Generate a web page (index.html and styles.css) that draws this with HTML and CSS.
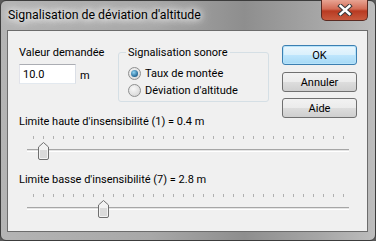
FILE: index.html
```html
<!DOCTYPE html>
<html lang="fr">
<head>
  <meta charset="UTF-8">
  <title>Signalisation de déviation d'altitude</title>
  <link rel="stylesheet" href="styles.css">
</head>
<body>
  <div class="window">
    <div class="titlebar">
      <span class="title">Signalisation de déviation d'altitude</span>
      <div class="close">
        <svg width="16" height="12" viewBox="0 0 16 12">
          <path d="M3.5 2 L12.5 10 M12.5 2 L3.5 10" stroke="#3a3a3a" stroke-width="4.4" stroke-linecap="square"/>
          <path d="M3.5 2 L12.5 10 M12.5 2 L3.5 10" stroke="#fff" stroke-width="2.4" stroke-linecap="square"/>
        </svg>
      </div>
    </div>

    <div class="client">
      <div class="top">
        <div class="value-col">
          <label class="label">Valeur demandée</label>
          <div class="value-row">
            <input class="field" type="text" value="10.0">
            <span class="unit">m</span>
          </div>
        </div>

        <fieldset class="group">
          <legend>Signalisation sonore</legend>
          <div class="radio"><span class="dot checked"></span>Taux de montée</div>
          <div class="radio"><span class="dot"></span>Déviation d'altitude</div>
        </fieldset>

        <div class="buttons">
          <button class="btn default">OK</button>
          <button class="btn">Annuler</button>
          <button class="btn">Aide</button>
        </div>
      </div>

      <div class="slider-block">
        <div class="label">Limite haute d'insensibilité (1) = 0.4 m</div>
        <div class="slider">
          <div class="ticks"></div>
          <div class="track"></div>
          <svg class="thumb" style="left: 19px" width="11" height="18" viewBox="0 0 11 18">
            <path d="M0.5 5 L5.5 0.5 L10.5 5 L10.5 16 Q10.5 17.5 9 17.5 L2 17.5 Q0.5 17.5 0.5 16 Z" fill="#f2f2f2" stroke="#6f6f6f"/>
            <path d="M2 8 L9 8 L9 16 L2 16 Z" fill="#dadada"/>
          </svg>
        </div>
      </div>

      <div class="slider-block">
        <div class="label">Limite basse d'insensibilité (7) = 2.8 m</div>
        <div class="slider">
          <div class="ticks"></div>
          <div class="track"></div>
          <svg class="thumb" style="left: 79px" width="11" height="18" viewBox="0 0 11 18">
            <path d="M0.5 5 L5.5 0.5 L10.5 5 L10.5 16 Q10.5 17.5 9 17.5 L2 17.5 Q0.5 17.5 0.5 16 Z" fill="#f2f2f2" stroke="#6f6f6f"/>
            <path d="M2 8 L9 8 L9 16 L2 16 Z" fill="#dadada"/>
          </svg>
        </div>
      </div>
    </div>
  </div>
</body>
</html>
```

FILE: styles.css
```css
body {
  margin: 0;
  background: #5a5a5a;
  font-family: Roboto, 'Noto Sans', sans-serif;
  font-size: 11px;
  color: #000;
}

.window {
  width: 376px;
  height: 241px;
  box-sizing: border-box;
  border: 1px solid #3c3c3c;
  border-radius: 6px;
  background: linear-gradient(to right, #b4b4b4 0%, #a8a8a8 40%, #8e8e8e 65%, #a6a6a6 85%, #bdbdbd 100%);
  padding: 0 7px 8px 6px;
  display: flex;
  flex-direction: column;
}

.titlebar {
  height: 30px;
  display: flex;
  justify-content: space-between;
  align-items: flex-start;
}

.title {
  margin-top: 7px;
  margin-left: 1px;
  font-size: 12.3px;
  text-shadow: 0 0 6px #fff, 0 0 10px #fff, 0 0 14px #eee;
}

.close {
  width: 47px;
  height: 21px;
  margin-top: -1px;
  box-sizing: border-box;
  border: 1px solid #5a2a22;
  border-top: none;
  border-radius: 0 0 5px 5px;
  background: linear-gradient(#e8a493 0%, #d26b55 45%, #b83a22 55%, #c85a3e 100%);
  display: flex;
  align-items: center;
  justify-content: center;
}

.client {
  flex: 1;
  background: #f0f0f0;
  border: 1px solid #6c6c6c;
  padding: 0 0 0 11px;
}

.top {
  display: flex;
  align-items: flex-start;
  height: 84px;
}

.label {
  display: block;
  line-height: 13px;
}

.value-col {
  width: 99px;
  padding-top: 15px;
}

.value-row {
  display: flex;
  align-items: center;
  margin-top: 5px;
}

.field {
  width: 57px;
  height: 20px;
  box-sizing: border-box;
  border: 1px solid #abadb3;
  border-color: #abadb3 #dbdfe6 #e3e9ef #e2e3ea;
  padding: 0 3px;
  font: inherit;
  background: #fff;
}

.unit {
  margin-left: 4px;
  margin-top: 3px;
}

.group {
  margin: 15px 0 0 0;
  width: 151px;
  box-sizing: border-box;
  border: 1px solid #d5dfe5;
  border-radius: 3px;
  padding: 6px 0 2px 9px;
  min-width: 0;
}

.group legend {
  padding: 0 2px;
  margin-left: -2px;
  line-height: 13px;
}

.radio {
  display: flex;
  align-items: center;
  height: 17px;
}

.dot {
  width: 11px;
  height: 11px;
  border-radius: 50%;
  border: 1px solid #8e8f8f;
  background: radial-gradient(circle at 40% 35%, #f8f8f8, #d0d0d0);
  margin-right: 4px;
  position: relative;
}

.dot.checked::after {
  content: "";
  position: absolute;
  left: 2px;
  top: 2px;
  width: 7px;
  height: 7px;
  border-radius: 50%;
  background: radial-gradient(circle at 40% 35%, #8fd5f5, #1b5e8c 75%);
}

.buttons {
  margin-left: 13px;
  padding-top: 14px;
  display: flex;
  flex-direction: column;
}

.btn {
  width: 75px;
  height: 20px;
  margin-top: 6px;
  border: 1px solid #707070;
  border-radius: 3px;
  background: linear-gradient(#f2f2f2 0%, #ebebeb 50%, #dddddd 50%, #cfcfcf 100%);
  font: inherit;
  padding: 0;
}

.btn.default {
  margin-top: 0;
  margin-bottom: 1px;
  border-color: #3c7fb1;
  background: linear-gradient(#eaf6fd 0%, #d9f0fc 50%, #bee6fd 50%, #a7d9f5 100%);
  box-shadow: inset 0 0 0 1px #b7e3fa;
}

.slider-block {
  height: 58px;
}

.slider {
  position: relative;
  display: flow-root;
}

.ticks {
  margin: 8px 0 0 14px;
  width: 311px;
  height: 3px;
  background: repeating-linear-gradient(to right, #b0b0b0 0, #b0b0b0 1px, transparent 1px, transparent 10px);
}

.track {
  margin: 10px 0 0 8px;
  width: 322px;
  height: 1px;
  background: #e4e4e4;
  border-top: 1px solid #a6a6a6;
  border-bottom: 1px solid #fff;
}

.thumb {
  position: absolute;
  top: 14px;
}
```
